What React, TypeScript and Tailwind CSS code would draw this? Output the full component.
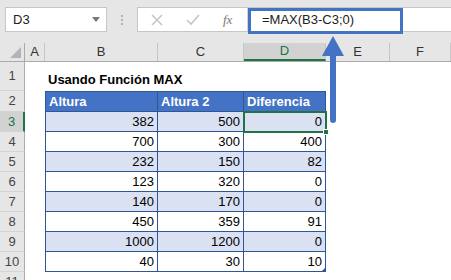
import React from "react";

const cols = [
  { key: "A", w: "w-[20px]" },
  { key: "B", w: "w-[113px]" },
  { key: "C", w: "w-[86px]" },
  { key: "D", w: "w-[82px]" },
  { key: "E", w: "w-[64px]" },
  { key: "F", w: "w-[61px]" },
];

const data = [
  [382, 500, 0],
  [700, 300, 400],
  [232, 150, 82],
  [123, 320, 0],
  [140, 170, 0],
  [450, 359, 91],
  [1000, 1200, 0],
  [40, 30, 10],
];

function RowHead({ n, active, h }: { n: number; active?: boolean; h: string }) {
  return (
    <div
      className={`w-[25px] shrink-0 ${h} flex items-center justify-center text-[13px] border-b border-[#d4d4d4] ${
        active
          ? "bg-[#d2d2d2] text-[#217346] border-r-2 border-r-[#217346]"
          : "bg-[#e6e6e6] text-[#444] border-r border-r-[#ababab]"
      }`}
    >
      {n}
    </div>
  );
}

export default function App() {
  return (
    <div className="relative w-[451px] h-[280px] overflow-hidden bg-white font-['Liberation_Sans',Arial,sans-serif] text-black">
      {/* formula bar */}
      <div className="h-[43px] bg-[#e6e6e6] flex items-start pt-[7px] pl-[5px]">
        <div className="w-[102px] h-[25px] bg-white border border-[#c6c6c6] flex items-center justify-between pl-[7px] pr-[6px]">
          <span className="text-[13px] text-[#222]">D3</span>
          <svg width="8" height="5" viewBox="0 0 8 5">
            <path d="M0 0h8L4 5z" fill="#777" />
          </svg>
        </div>
        <div className="w-[30px] h-[25px] flex flex-col items-center justify-center gap-[2px]">
          <span className="w-[2px] h-[2px] bg-[#b0b0b0]" />
          <span className="w-[2px] h-[2px] bg-[#b0b0b0]" />
          <span className="w-[2px] h-[2px] bg-[#b0b0b0]" />
        </div>
        <div className="flex-1 h-[25px] bg-white border border-[#c6c6c6] border-r-0 flex items-center">
          <div className="w-[110px] h-full flex items-center border-r border-[#d4d4d4]">
            <svg className="ml-[13px]" width="12" height="12" viewBox="0 0 12 12">
              <path d="M1 1l10 10M11 1L1 11" stroke="#c4c4c4" strokeWidth="1.5" />
            </svg>
            <svg className="ml-[23px]" width="14" height="12" viewBox="0 0 14 12">
              <path d="M1 6l4 4 8-9" stroke="#c4c4c4" strokeWidth="1.6" fill="none" />
            </svg>
            <span className="ml-[23px] text-[13px] italic text-[#777] font-['Liberation_Serif',serif]">fx</span>
          </div>
          <span className="ml-[14px] text-[13px] text-[#222]">=MAX(B3-C3;0)</span>
        </div>
      </div>

      {/* column headers */}
      <div className="flex h-[19px] bg-[#e6e6e6] border-b border-[#ababab]">
        <div className="w-[25px] shrink-0 relative border-r border-[#ababab]">
          <svg className="absolute right-[3px] bottom-[3px]" width="11" height="11" viewBox="0 0 11 11">
            <path d="M11 0v11H0z" fill="#b4b4b4" />
          </svg>
        </div>
        {cols.map((c) => (
          <div
            key={c.key}
            className={`${c.w} shrink-0 flex items-center justify-center text-[13px] ${
              c.key === "D"
                ? "bg-[#d2d2d2] text-[#217346] border-b-2 border-[#217346] border-r border-r-[#c6c6c6]"
                : "text-[#333] border-r border-[#c6c6c6]"
            }`}
          >
            {c.key}
          </div>
        ))}
      </div>

      {/* row 1 */}
      <div className="flex">
        <RowHead n={1} h="h-[29px]" />
        <div className="w-[20px] shrink-0" />
        <div className="flex-1 flex items-end pb-[2px] pl-[3px] text-[13px] font-bold">Usando Función MAX</div>
      </div>

      {/* row 2 header */}
      <div className="flex">
        <RowHead n={2} h="h-[21px]" />
        <div className="w-[20px] shrink-0" />
        {["Altura", "Altura 2", "Diferencia"].map((t, i) => (
          <div
            key={t}
            className={`${["w-[113px]", "w-[86px]", "w-[82px]"][i]} h-[21px] shrink-0 bg-[#4472c4] text-white font-bold text-[13px] flex items-center pl-[3px] border-t border-b border-r border-[#2f5597] ${
              i === 0 ? "border-l" : ""
            }`}
          >
            {t}
          </div>
        ))}
      </div>

      {data.map((r, ri) => (
        <div key={ri} className="flex">
          <RowHead n={ri + 3} active={ri === 0} h="h-[20px]" />
          <div className="w-[20px] shrink-0" />
          {r.map((v, ci) => (
            <div
              key={ci}
              className={`${["w-[113px]", "w-[86px]", "w-[82px]"][ci]} h-[20px] shrink-0 text-[13px] flex items-center justify-end pr-[3px] border-b border-r border-[#2f5597] ${
                ci === 0 ? "border-l" : ""
              } ${ri % 2 === 0 ? "bg-[#d9e1f2]" : "bg-white"}`}
            >
              {v}
            </div>
          ))}
        </div>
      ))}

      <div className="flex">
        <RowHead n={11} h="h-[20px]" />
      </div>

      {/* selection D3 */}
      <div className="absolute left-[243px] top-[111px] w-[84px] h-[22px] border-2 border-[#217346]" />
      <div className="absolute left-[323px] top-[129px] w-[6px] h-[6px] bg-[#217346] border border-white" />

      {/* table resize handle */}
      <svg className="absolute left-[321px] top-[267px]" width="5" height="5" viewBox="0 0 5 5">
        <path d="M5 0v5H0z" fill="#2f5597" />
      </svg>

      {/* formula highlight */}
      <div className="absolute left-[248px] top-[8px] w-[155px] h-[26px] border-[3px] border-[#4472c4]" />

      {/* arrow */}
      <svg className="absolute left-[322px] top-[36px]" width="22" height="88" viewBox="0 0 22 88">
        <path d="M11 0L22 20H0z" fill="#4472c4" />
        <path d="M8 18h6v66a3 3 0 0 1-6 0z" fill="#4472c4" />
      </svg>
    </div>
  );
}
